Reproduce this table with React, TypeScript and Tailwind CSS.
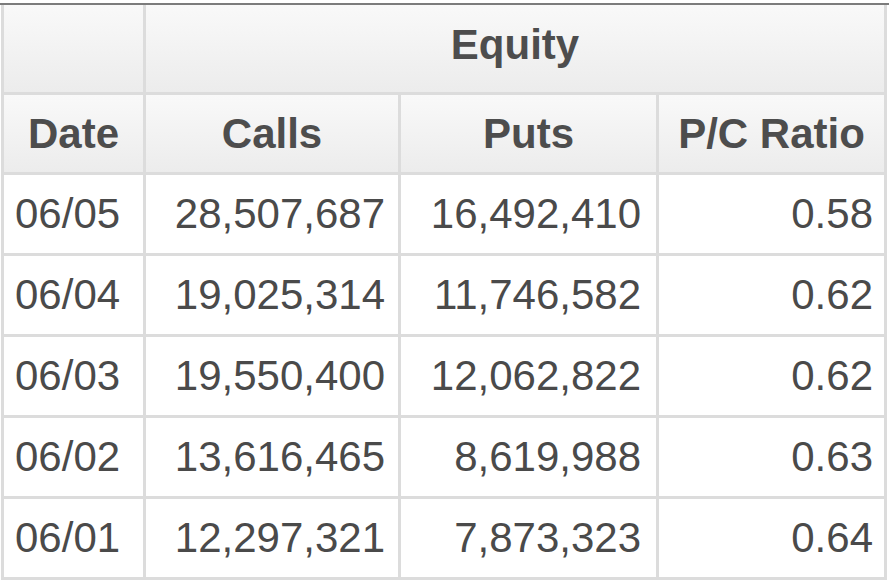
import { Fragment } from "react";

const rows = [
  { date: "06/05", calls: "28,507,687", puts: "16,492,410", ratio: "0.58" },
  { date: "06/04", calls: "19,025,314", puts: "11,746,582", ratio: "0.62" },
  { date: "06/03", calls: "19,550,400", puts: "12,062,822", ratio: "0.62" },
  { date: "06/02", calls: "13,616,465", puts: "8,619,988", ratio: "0.63" },
  { date: "06/01", calls: "12,297,321", puts: "7,873,323", ratio: "0.64" },
];

const head = "bg-gradient-to-b from-[#f9f9f9] to-[#ececec] flex items-center justify-center font-bold text-[#4d4d4d]";
const cell = "bg-white h-[78px] flex items-center text-[#4a4a4a]";

export default function App() {
  return (
    <div className="w-[889px] h-[586px] bg-white pt-[3px]" style={{ fontFamily: '"Liberation Sans", Arial, sans-serif' }}>
      <div className="border-t-2 border-[#7c7c7c]">
        {/* table body: grey gap shows through as the cell borders */}
        <div className="ml-[1px] w-[886px] grid grid-cols-[139px_252px_255px_225px] gap-[3px] bg-[#dcdcdc] px-[3px] pb-[3px] text-[42px] leading-none">
          <div className={`${head} h-[87px]`}></div>
          <div className={`${head} h-[87px] col-span-3 pb-[8px]`}>Equity</div>

          <div className={`${head} h-[77px]`}>Date</div>
          <div className={`${head} h-[77px]`}>Calls</div>
          <div className={`${head} h-[77px]`}>Puts</div>
          <div className={`${head} h-[77px]`}>P/C Ratio</div>

          {rows.map((r) => (
            <Fragment key={r.date}>
              <div className={`${cell} pl-[11px]`}>{r.date}</div>
              <div className={`${cell} justify-end pr-[13px]`}>{r.calls}</div>
              <div className={`${cell} justify-end pr-[15px]`}>{r.puts}</div>
              <div className={`${cell} justify-end pr-[11px]`}>{r.ratio}</div>
            </Fragment>
          ))}
        </div>
      </div>
    </div>
  );
}
